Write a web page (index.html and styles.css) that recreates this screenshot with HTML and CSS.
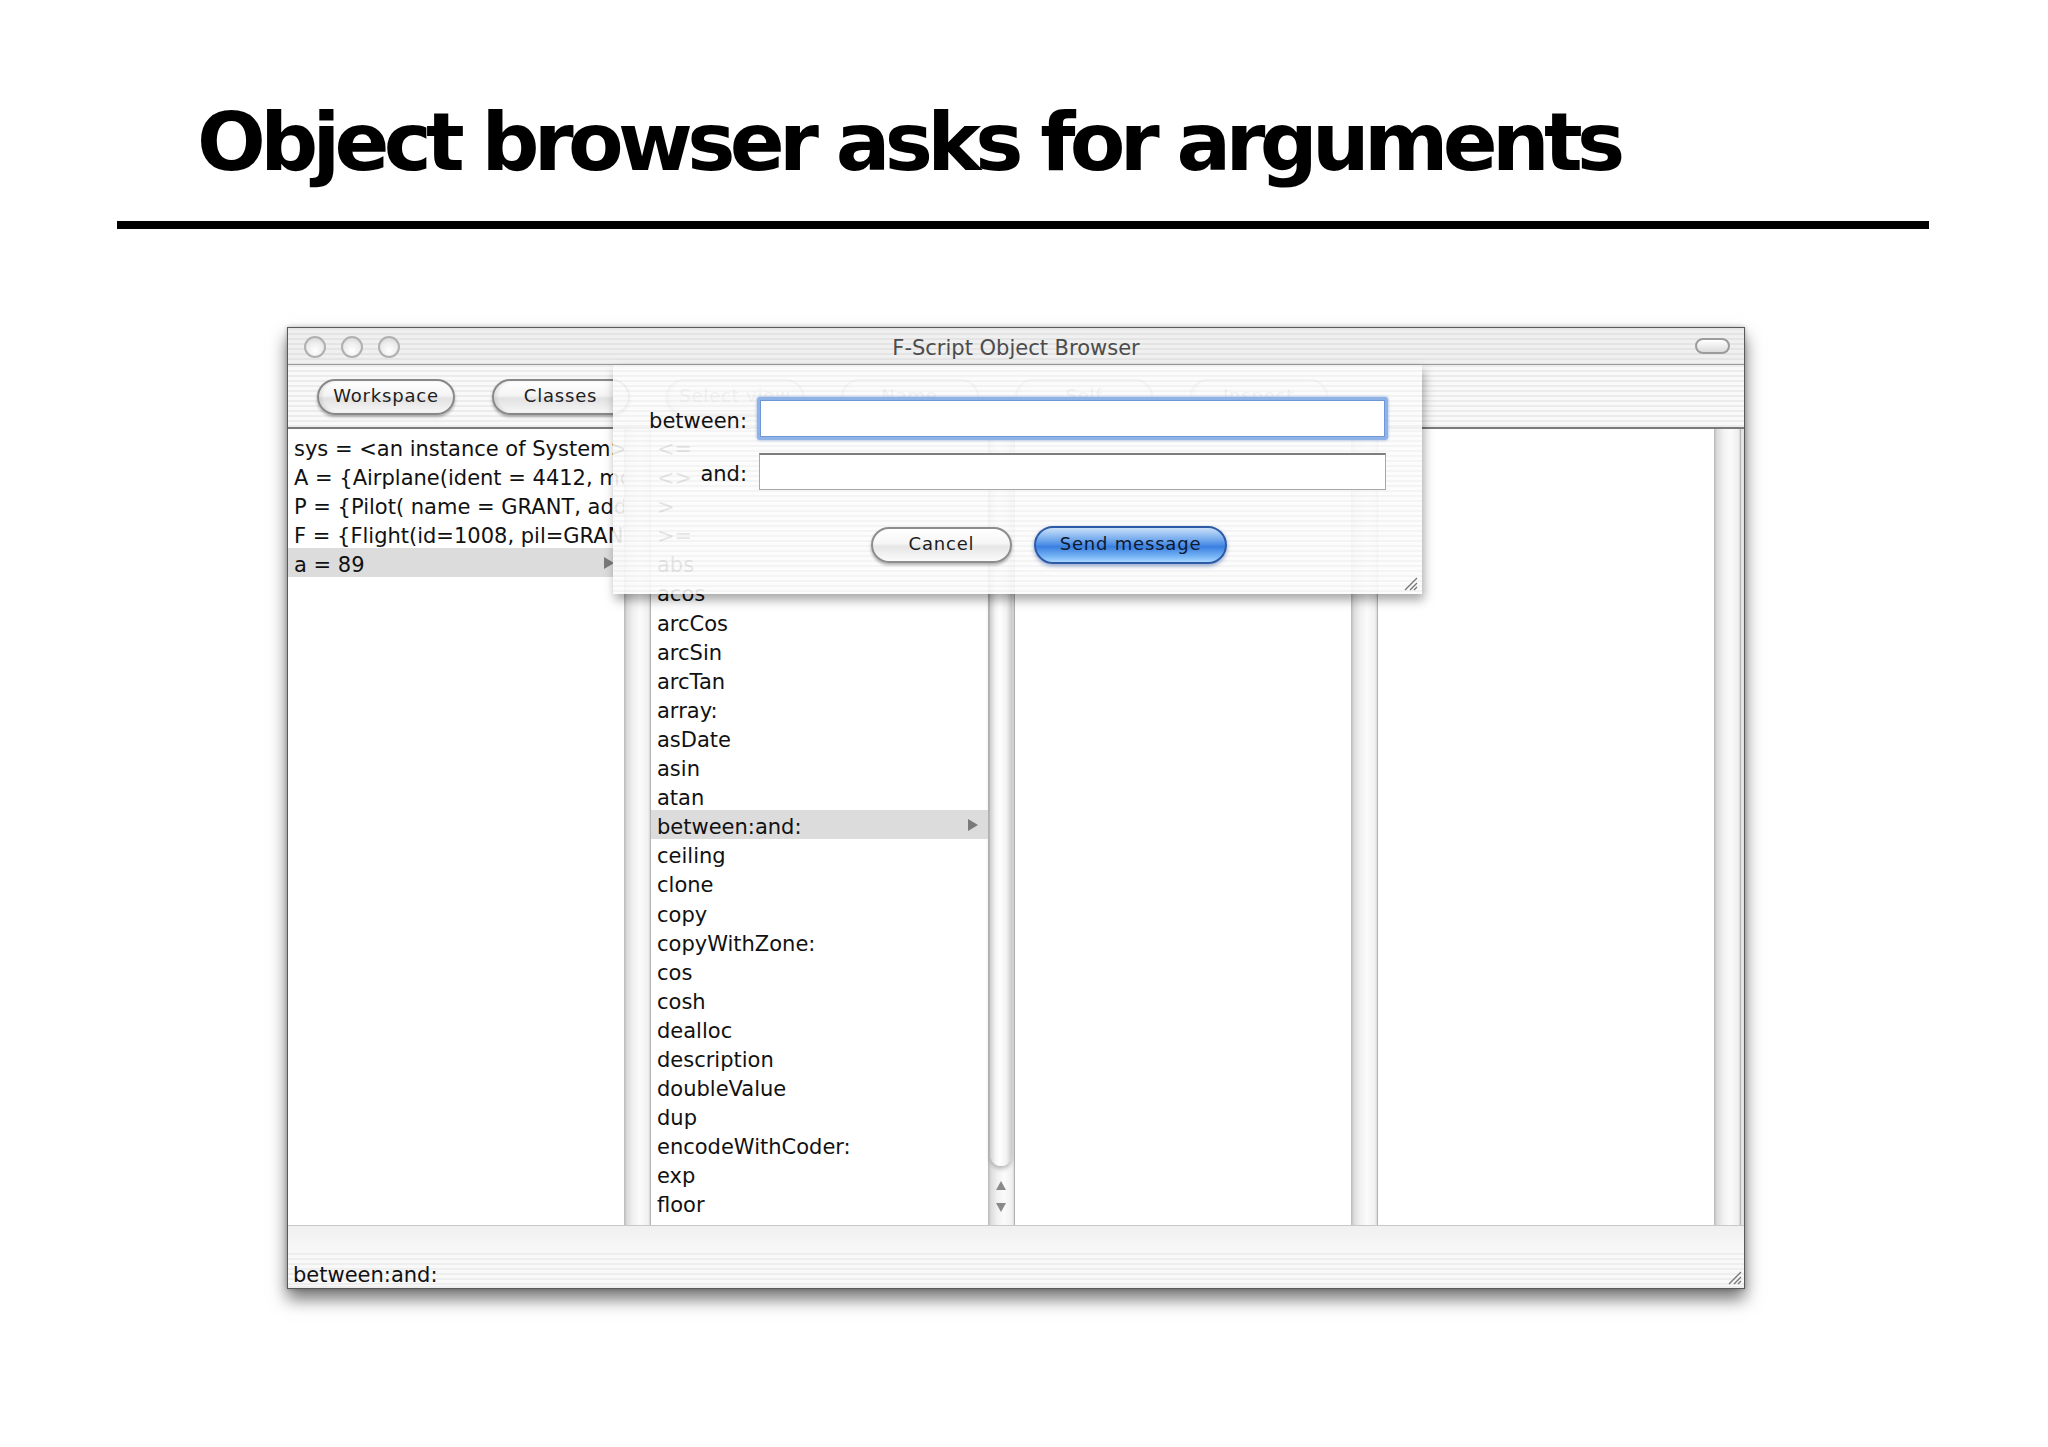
FILE: index.html
```html
<!DOCTYPE html>
<html>
<head>
<meta charset="utf-8">
<title>Object browser asks for arguments</title>
<link rel="stylesheet" href="styles.css">
</head>
<body>
<div class="slide">
  <h1 class="title">Object browser asks for arguments</h1>
  <div class="rule"></div>

  <div class="window">
    <div class="titlebar">
      <div class="lights">
        <span class="light"></span><span class="light"></span><span class="light"></span>
      </div>
      <div class="wtitle">F-Script Object Browser</div>
      <div class="zoomwrap"><span class="zoombtn"></span></div>
    </div>

    <div class="toolbar">
      <div class="pill">Workspace</div>
      <div class="pill">Classes</div>
      <div class="pill dis">Select view</div>
      <div class="pill dis">Name</div>
      <div class="pill dis">Self</div>
      <div class="pill dis">Inspect</div>
    </div>

    <div class="browser">
      <div class="col">
        <div class="list">
          <div class="row">sys = &lt;an instance of System&gt;</div>
          <div class="row">A = {Airplane(ident = 4412, model = B747, capacity = 350)}</div>
          <div class="row">P = {Pilot( name = GRANT, address = PARIS, salary = 12000)}</div>
          <div class="row">F = {Flight(id=1008, pil=GRANT, pln=4412)}</div>
          <div class="row sel">a = 89<span class="arrow"></span></div>
        </div>
        <div class="scroll"></div>
      </div>
      <div class="col">
        <div class="list">
          <div class="row">&lt;=</div>
          <div class="row">&lt;&gt;</div>
          <div class="row">&gt;</div>
          <div class="row">&gt;=</div>
          <div class="row">abs</div>
          <div class="row">acos</div>
          <div class="row">arcCos</div>
          <div class="row">arcSin</div>
          <div class="row">arcTan</div>
          <div class="row">array:</div>
          <div class="row">asDate</div>
          <div class="row">asin</div>
          <div class="row">atan</div>
          <div class="row sel">between:and:<span class="arrow"></span></div>
          <div class="row">ceiling</div>
          <div class="row">clone</div>
          <div class="row">copy</div>
          <div class="row">copyWithZone:</div>
          <div class="row">cos</div>
          <div class="row">cosh</div>
          <div class="row">dealloc</div>
          <div class="row">description</div>
          <div class="row">doubleValue</div>
          <div class="row">dup</div>
          <div class="row">encodeWithCoder:</div>
          <div class="row">exp</div>
          <div class="row">floor</div>
          <div class="row">fractionPart</div>
        </div>
        <div class="scroll">
          <div class="knob"></div>
          <div class="arrows">
            <span class="up"></span>
            <span class="down"></span>
          </div>
        </div>
      </div>
      <div class="col">
        <div class="list"></div>
        <div class="scroll"></div>
      </div>
      <div class="col">
        <div class="list"></div>
        <div class="scroll"></div>
      </div>
    </div>

    <div class="status">
      <div class="status-top"></div>
      <div class="status-bottom">
        <span class="status-text">between:and:</span>
        <svg class="grip" width="16" height="16" viewBox="0 0 16 16">
          <path d="M15 3 L3 15 M15 8 L8 15 M15 12 L12 15" stroke="#777" stroke-width="1.4" fill="none"/>
        </svg>
      </div>
    </div>

    <div class="sheet">
      <div class="form">
        <label class="lbl">between:</label>
        <div class="field focus"></div>
        <label class="lbl">and:</label>
        <div class="field plain"></div>
      </div>
      <div class="actions">
        <div class="btn cancel">Cancel</div>
        <div class="btn send">Send message</div>
      </div>
      <svg class="sheet-grip" width="15" height="15" viewBox="0 0 15 15">
        <path d="M14 2 L2 14 M14 7 L7 14 M14 11 L11 14" stroke="#777" stroke-width="1.4" fill="none"/>
      </svg>
    </div>
  </div>
</div>
</body>
</html>
```

FILE: styles.css
```css
html, body {
  margin: 0;
  padding: 0;
  background: #ffffff;
  width: 2048px;
  height: 1447px;
  overflow: hidden;
}

.slide {
  display: flex;
  flex-direction: column;
  align-items: flex-start;
}

.title {
  margin: 102px 0 0 197px;
  font-family: "DejaVu Sans", sans-serif;
  font-weight: bold;
  font-size: 81px;
  line-height: 81px;
  letter-spacing: -5.7px;
  color: #000;
  white-space: nowrap;
}

.rule {
  margin: 38px 0 0 117px;
  width: 1812px;
  height: 8px;
  background: #000;
}

.window {
  position: relative;
  margin: 98px 0 0 287px;
  width: 1458px;
  height: 962px;
  box-sizing: border-box;
  border: 1px solid #5a5a5a;
  background: #eeeeee;
  box-shadow: 0 10px 16px rgba(0, 0, 0, 0.55), 0 0 4px rgba(0, 0, 0, 0.25);
  display: flex;
  flex-direction: column;
  font-family: "DejaVu Sans", sans-serif;
}

/* ---------- title bar ---------- */
.titlebar {
  height: 36px;
  border-bottom: 1px solid #9a9a9a;
  background: repeating-linear-gradient(to bottom, #e4e4e4 0, #e4e4e4 2px, #f0f0f0 2px, #f0f0f0 5px);
  display: grid;
  grid-template-columns: 1fr auto 1fr;
  align-items: center;
}

.lights {
  display: flex;
  gap: 15px;
  padding-left: 16px;
  padding-top: 2px;
}

.light {
  width: 22px;
  height: 22px;
  box-sizing: border-box;
  border-radius: 50%;
  border: 2px solid #b0b0b0;
  background: radial-gradient(circle at 50% 70%, #ffffff 0, #ececec 55%, #cfcfcf 100%);
}

.wtitle {
  font-size: 21px;
  color: #4c4c4c;
  white-space: nowrap;
  padding-top: 4px;
}

.zoomwrap {
  display: flex;
  justify-content: flex-end;
  padding-right: 14px;
}

.zoombtn {
  width: 35px;
  height: 16px;
  box-sizing: border-box;
  border: 2px solid #9c9c9c;
  border-radius: 8px;
  background: linear-gradient(to bottom, #ffffff, #dcdcdc);
}

/* ---------- toolbar ---------- */
.toolbar {
  height: 64px;
  border-bottom: 2px solid #7a7a7a;
  background: repeating-linear-gradient(to bottom, #ececec 0, #ececec 2px, #f9f9f9 2px, #f9f9f9 5px);
  display: flex;
  align-items: flex-start;
  gap: 36.5px;
  padding: 14px 0 0 29px;
  box-sizing: border-box;
}

.pill {
  width: 138px;
  height: 36px;
  box-sizing: border-box;
  border: 2px solid #888888;
  border-radius: 18px;
  background: linear-gradient(to bottom, #ffffff 0, #f4f4f4 45%, #e2e2e2 55%, #f7f7f7 100%);
  box-shadow: 0 2px 3px rgba(0, 0, 0, 0.3), inset 3px 0 3px rgba(0, 0, 0, 0.08);
  display: flex;
  align-items: center;
  justify-content: center;
  font-size: 18px;
  letter-spacing: 0.8px;
  color: #1e1e1e;
  white-space: nowrap;
  padding-bottom: 3px;
}

.pill.dis {
  color: #8a8a8a;
  border-color: #b0b0b0;
}

/* ---------- browser columns ---------- */
.browser {
  height: 796px;
  display: flex;
  background: #e4e4e4;
}

.col {
  width: 363px;
  display: flex;
}

.col:nth-child(2) {
  width: 364px;
}

.list {
  flex: 1;
  background: #ffffff;
  padding-top: 3px;
  overflow: hidden;
  font-size: 21px;
  color: #111;
}

.row {
  position: relative;
  height: 29.1px;
  box-sizing: border-box;
  line-height: 23px;
  padding: 6px 0 0 6px;
  white-space: nowrap;
  overflow: hidden;
}

.row:last-child {
  overflow: visible;
}

.row.sel {
  background: #dcdcdc;
}

.arrow {
  position: absolute;
  right: 10px;
  top: 9px;
  width: 0;
  height: 0;
  border-left: 10px solid #7a7a7a;
  border-top: 6px solid transparent;
  border-bottom: 6px solid transparent;
}

.scroll {
  width: 27px;
  box-sizing: border-box;
  border-right: 1px solid #b4b4b4;
  background: linear-gradient(to right, #b8b8b8 0, #dcdcdc 3px, #f0f0f0 9px, #fbfbfb 16px, #f0f0f0 24px, #d8d8d8 26px);
  display: flex;
  flex-direction: column;
}

.knob {
  height: 734px;
  margin: 3px 2px 0 2px;
  border-radius: 0 0 13px 13px;
  background: linear-gradient(to right, #cfcfcf 0, #f4f4f4 25%, #ffffff 45%, #f1f1f1 75%, #c9c9c9 100%);
  box-shadow: 0 3px 4px rgba(0, 0, 0, 0.25);
}

.arrows {
  flex: 1;
  display: flex;
  flex-direction: column;
  align-items: center;
  justify-content: center;
  gap: 13px;
  padding-top: 2px;
}

.up {
  width: 0;
  height: 0;
  border-bottom: 9px solid #8a8a8a;
  border-left: 5px solid transparent;
  border-right: 5px solid transparent;
}

.down {
  width: 0;
  height: 0;
  border-top: 9px solid #8a8a8a;
  border-left: 5px solid transparent;
  border-right: 5px solid transparent;
}

/* ---------- status bar ---------- */
.status {
  height: 61px;
  display: flex;
  flex-direction: column;
  border-top: 1px solid #c8c8c8;
  box-sizing: border-box;
}

.status-top {
  height: 27px;
  background: linear-gradient(to bottom, #f0f0f0, #f8f8f8);
}

.status-bottom {
  flex: 1;
  display: flex;
  align-items: flex-end;
  justify-content: space-between;
  background: repeating-linear-gradient(to bottom, #eeeeee 0, #eeeeee 2px, #f9f9f9 2px, #f9f9f9 5px);
  padding: 0 2px 0 5px;
}

.status-text {
  font-size: 21px;
  line-height: 22px;
  color: #111;
  white-space: nowrap;
}

.grip {
  margin-bottom: 1px;
}

/* ---------- sheet ---------- */
.sheet {
  position: absolute;
  left: 325px;
  top: 37px;
  width: 809px;
  height: 229px;
  box-sizing: border-box;
  background: repeating-linear-gradient(to bottom, rgba(243, 243, 243, 0.9) 0, rgba(243, 243, 243, 0.9) 2px, rgba(252, 252, 252, 0.9) 2px, rgba(252, 252, 252, 0.9) 5px);
  box-shadow: 2px 6px 10px rgba(0, 0, 0, 0.35);
  padding: 32px 34px 0 0;
}

.form {
  display: grid;
  grid-template-columns: 134px 1fr;
  column-gap: 10px;
  row-gap: 13px;
  align-items: center;
}

.lbl {
  font-size: 21px;
  color: #111;
  text-align: right;
  padding-top: 4px;
  white-space: nowrap;
}

.field {
  background: #ffffff;
  box-sizing: border-box;
}

.field.focus {
  height: 43px;
  border: 3px solid #8fb3e6;
  border-radius: 3px;
  box-shadow: 0 0 3px rgba(70, 120, 210, 0.6), inset 0 0 0 1px #6f97d6;
}

.field.plain {
  height: 37px;
  margin: 0 2px;
  border: 1px solid #a8a8a8;
  border-top: 2px solid #7e7e7e;
}

.actions {
  display: flex;
  gap: 22px;
  padding-left: 258px;
  margin-top: 36px;
  align-items: center;
}

.btn {
  height: 36px;
  box-sizing: border-box;
  border-radius: 18px;
  display: flex;
  align-items: center;
  justify-content: center;
  font-size: 18px;
  letter-spacing: 0.8px;
  white-space: nowrap;
  padding-bottom: 3px;
}

.btn.cancel {
  width: 141px;
  border: 2px solid #8d8d8d;
  background: linear-gradient(to bottom, #ffffff 0, #f6f6f6 45%, #e6e6e6 55%, #fbfbfb 100%);
  box-shadow: 0 2px 3px rgba(0, 0, 0, 0.3);
  color: #1c1c1c;
}

.btn.send {
  width: 193px;
  height: 38px;
  border: 2px solid #2c5aa6;
  border-radius: 19px;
  background: linear-gradient(to bottom, #c9e0fa 0, #7fb1ee 30%, #4a8ce6 50%, #3a7fe0 55%, #7ab7f6 85%, #a9d6ff 100%);
  box-shadow: 0 2px 4px rgba(20, 60, 140, 0.45);
  color: #0d1a33;
}

.sheet-grip {
  position: absolute;
  right: 4px;
  bottom: 3px;
}
```
